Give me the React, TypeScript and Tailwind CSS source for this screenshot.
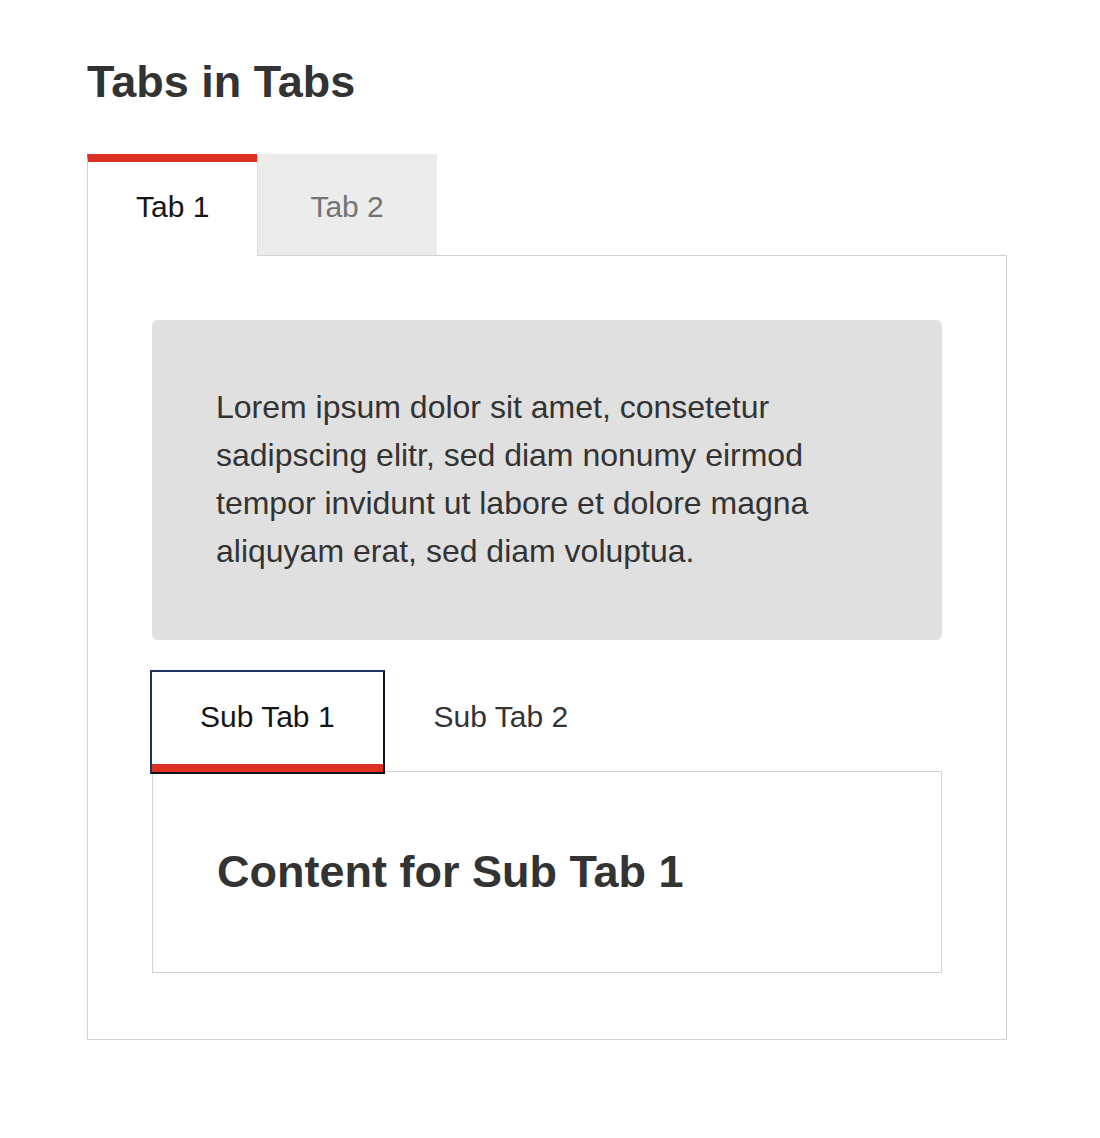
import React, { useState } from "react";

const font = { fontFamily: '"Liberation Sans", Arial, sans-serif' };

export default function App() {
  const [tab, setTab] = useState(0);
  const [subTab, setSubTab] = useState(0);

  return (
    <div className="min-h-[1138px] bg-white pl-[87px] pt-[55px] text-[#333]" style={font}>
      <h1 className="mb-[46px] text-[45px] font-bold leading-[53px] text-[#333]">Tabs in Tabs</h1>

      {/* Outer tabs */}
      <div className="w-[920px]">
        <div className="relative z-10 flex items-start">
          <button
            onClick={() => setTab(0)}
            className={
              tab === 0
                ? "-mb-px flex h-[102px] items-center border-l border-t-8 border-l-[#d2d2d2] border-t-[#db3022] bg-white pl-[48px] pr-[48px] pb-[5px] text-[30px] leading-[36px] text-[#151515]"
                : "flex h-[101px] items-center border-l border-l-[#dcdcdc] bg-[#ececec] pl-[48px] pr-[48px] pt-[5px] text-[30px] leading-[36px] text-[#737373]"
            }
          >
            Tab 1
          </button>
          <button
            onClick={() => setTab(1)}
            className={
              tab === 1
                ? "-mb-px flex h-[102px] items-center border-r border-t-8 border-r-[#d2d2d2] border-t-[#db3022] bg-white pl-[52px] pr-[53px] pb-[5px] text-[30px] leading-[36px] text-[#151515]"
                : "flex h-[101px] items-center border-l border-l-[#dcdcdc] bg-[#ececec] pl-[52px] pr-[53px] pt-[5px] text-[30px] leading-[36px] text-[#737373]"
            }
          >
            Tab 2
          </button>
        </div>

        <div className="border border-[#d2d2d2] px-16 pt-16 pb-[66px]">
          {tab === 0 ? (
            <>
              <div className="rounded-md bg-[#e0e0e0] pb-[65px] pl-16 pr-10 pt-[63px] text-[32px] leading-[48px] text-[#333]">
                Lorem ipsum dolor sit amet, consetetur
                <br />
                sadipscing elitr, sed diam nonumy eirmod
                <br />
                tempor invidunt ut labore et dolore magna
                <br />
                aliquyam erat, sed diam voluptua.
              </div>

              {/* Sub tabs */}
              <div className="mt-8">
                <div className="relative z-10 flex">
                  {["Sub Tab 1", "Sub Tab 2"].map((label, i) => (
                    <button
                      key={label}
                      onClick={() => setSubTab(i)}
                      className={
                        subTab === i
                          ? "relative flex h-[100px] items-center border-b-8 border-b-[#db3022] bg-white px-[48px] pb-[2px] text-[30px] leading-[36px] text-[#151515]"
                          : "flex h-[100px] items-center pl-[51px] pr-[48px] pb-[10px] text-[30px] leading-[36px] text-[#333]"
                      }
                    >
                      {label}
                      {subTab === i && (
                        <span className="pointer-events-none absolute -inset-[2px] -bottom-[10px] border-2 border-b-[#0c1220] border-l-[#1c3461] border-r-[#0c1220] border-t-[#1c3461]" />
                      )}
                    </button>
                  ))}
                </div>
                <div className="-mt-px border border-[#d2d2d2] px-16 pb-[74px] pt-[73px]">
                  <h2 className="text-[45px] font-bold leading-[53px] text-[#333]">
                    Content for Sub Tab {subTab + 1}
                  </h2>
                </div>
              </div>
            </>
          ) : (
            <div className="text-[32px] leading-[48px]">Content for Tab 2</div>
          )}
        </div>
      </div>
    </div>
  );
}
